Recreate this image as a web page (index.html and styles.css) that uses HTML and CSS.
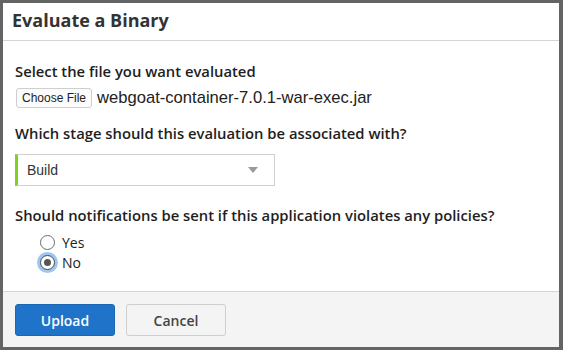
FILE: index.html
```html
<!DOCTYPE html>
<html lang="en">
<head>
    <meta charset="UTF-8">
    <title>Evaluate a Binary</title>
    <link rel="stylesheet" href="styles.css">
</head>
<body>
    <div class="modal">
        <div class="modal-header">
            <h1>Evaluate a Binary</h1>
        </div>

        <div class="modal-body">
            <div class="field">
                <label class="field-label">Select the file you want evaluated</label>
                <div class="file-row">
                    <button class="file-btn">Choose File</button>
                    <span class="file-name">webgoat-container-7.0.1-war-exec.jar</span>
                </div>
            </div>

            <div class="field field-stage">
                <label class="field-label">Which stage should this evaluation be associated with?</label>
                <div class="stage-select">
                    <span>Build</span>
                    <span class="caret"></span>
                </div>
            </div>

            <div class="field">
                <label class="field-label">Should notifications be sent if this application violates any policies?</label>
                <div class="radios">
                    <label class="radio"><span class="dot"></span>Yes</label>
                    <label class="radio checked"><span class="dot"></span>No</label>
                </div>
            </div>
        </div>

        <div class="modal-footer">
            <button class="btn btn-primary">Upload</button>
            <button class="btn btn-default">Cancel</button>
        </div>
    </div>
</body>
</html>
```

FILE: styles.css
```css
:root {
    --frame: #646464;
    --text: #2b2b2b;
    --line: #d4d4d4;
    --blue: #1f74c9;
    --green: #7ed321;
    --footer-bg: #f4f4f4;
}

* {
    margin: 0;
    padding: 0;
    box-sizing: border-box;
}

body {
    background-color: var(--frame);
    font-family: 'Open Sans', sans-serif;
    color: var(--text);
    padding: 3px 4px 3px 3px;
    height: 350px;
}

.modal {
    background-color: #fff;
    height: 344px;
    display: flex;
    flex-direction: column;
}

.modal-header {
    height: 38px;
    border-bottom: 1px solid var(--line);
    padding: 4px 9px 0;
}

.modal-header h1 {
    font-size: 18px;
    font-weight: 700;
    color: #333;
    line-height: 26px;
}

.modal-body {
    flex-grow: 1;
    padding: 21px 12px 0;
}

.field {
    margin-bottom: 16px;
}

.field-stage {
    margin-bottom: 20px;
}

.field-label {
    display: block;
    font-size: 14.8px;
    font-weight: 600;
    color: #1e1e1e;
    line-height: 18px;
    margin-bottom: 8px;
}

.file-row {
    display: flex;
    align-items: center;
    gap: 5px;
}

.file-btn {
    font-family: 'Liberation Sans', sans-serif;
    font-size: 12px;
    color: #222;
    background-color: #fbfbfb;
    border: 1px solid #cfcfcf;
    border-radius: 3px;
    padding: 2px 5px;
    height: 20px;
    margin-left: 1px;
}

.file-name {
    font-family: 'Liberation Sans', sans-serif;
    font-size: 16.6px;
    color: #222;
}

.stage-select {
    width: 260px;
    height: 32px;
    border: 1px solid #d0d0d0;
    border-left: 3px solid var(--green);
    display: flex;
    align-items: center;
    justify-content: space-between;
    padding: 0 16px 0 9px;
    font-family: 'Liberation Sans', sans-serif;
    font-size: 14px;
    color: #333;
    margin-top: 12px;
}

.field-stage .field-label {
    margin-bottom: 0;
}

.caret {
    width: 0;
    height: 0;
    border-left: 5px solid transparent;
    border-right: 5px solid transparent;
    border-top: 6px solid #999;
}

.radios {
    padding-left: 25px;
}

.radio {
    display: flex;
    align-items: center;
    gap: 7px;
    font-size: 14px;
    color: #222;
    height: 20px;
}

.dot {
    width: 15px;
    height: 15px;
    border: 1px solid #6b6b6b;
    border-radius: 50%;
    background-color: #fff;
    display: flex;
    align-items: center;
    justify-content: center;
}

.checked .dot {
    border-color: #4a4a4a;
    box-shadow: 0 0 0 3px #9ec6f2;
}

.checked .dot::after {
    content: '';
    width: 7px;
    height: 7px;
    border-radius: 50%;
    background-color: #555;
}

.modal-footer {
    height: 56px;
    background-color: var(--footer-bg);
    border-top: 1px solid var(--line);
    padding: 12px 12px 0;
    display: flex;
    gap: 11px;
}

.btn {
    width: 100px;
    height: 32px;
    border-radius: 3px;
    font-family: 'Open Sans', sans-serif;
    font-size: 14px;
    font-weight: 600;
}

.btn-primary {
    background-color: var(--blue);
    border: 1px solid #1b67b4;
    color: #fff;
}

.btn-default {
    background-color: var(--footer-bg);
    border: 1px solid #cfcfcf;
    color: #444;
}
```
